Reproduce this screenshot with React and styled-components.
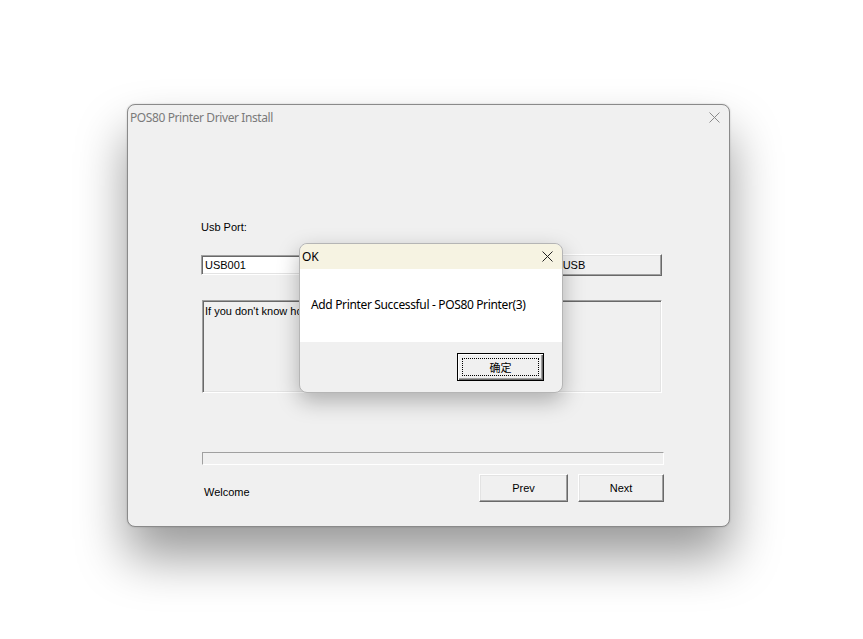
import styled, { createGlobalStyle } from "styled-components";

const GlobalStyle = createGlobalStyle`
  html, body {
    margin: 0;
    padding: 0;
    background: #ffffff;
  }
`;

const dlgFont = `"Liberation Sans", "DejaVu Sans", sans-serif`;
const uiFont = `"Noto Sans", "Open Sans", sans-serif`;

const Desktop = styled.div`
  width: 863px;
  height: 639px;
  padding: 104px 0 0 127px;
  box-sizing: border-box;
  overflow: hidden;
`;

const Window = styled.div`
  position: relative;
  width: 603px;
  height: 423px;
  box-sizing: border-box;
  background: #f0f0f0;
  border: 1px solid #8a8a8a;
  border-radius: 8px;
  box-shadow: 0 30px 50px rgba(0, 0, 0, 0.4), 0 0 2px rgba(0, 0, 0, 0.2);
  display: flex;
  flex-direction: column;
`;

const TitleBar = styled.div`
  height: 25px;
  display: flex;
  align-items: center;
  justify-content: space-between;
  padding: 0 9px 0 2px;
  font-family: ${uiFont};
  font-size: 12px;
  letter-spacing: ${(p) => (p.$active ? 0 : -0.4)}px;
  color: ${(p) => (p.$active ? "#000" : "#7a7a7a")};
  background: ${(p) => p.$bg || "transparent"};
  border-radius: 7px 7px 0 0;
`;

const CloseIcon = ({ color }) => (
  <svg width="11" height="11" viewBox="0 0 11 11">
    <path d="M0.5 0.5 L10.5 10.5 M10.5 0.5 L0.5 10.5" stroke={color} strokeWidth="1" />
  </svg>
);

const Body = styled.div`
  flex: 1;
  display: flex;
  flex-direction: column;
  padding: 91px 67px 0 73px;
  font-family: ${dlgFont};
  font-size: 11px;
  color: #000;
`;

const Label = styled.div`
  line-height: 13px;
  margin-left: ${(p) => p.$indent || 0}px;
  margin-top: ${(p) => p.$drop || 0}px;
`;

const PortRow = styled.div`
  display: flex;
  align-items: center;
  justify-content: space-between;
  margin-top: 20px;
  height: 22px;
`;

const Sunken = styled.div`
  box-sizing: border-box;
  border-style: solid;
  border-width: 1px;
  border-color: #a0a0a0 #ffffff #ffffff #a0a0a0;
  box-shadow: inset 1px 1px 0 #696969, inset -1px -1px 0 #e3e3e3;
`;

const Field = styled(Sunken)`
  width: 240px;
  height: 20px;
  background: #ffffff;
  padding: 2px 3px;
  line-height: 14px;
`;

const Memo = styled(Sunken)`
  margin-top: 24px;
  margin-left: 1px;
  height: 93px;
  background: #f0f0f0;
  padding: 4px 2px;
  line-height: 13px;
`;

const Progress = styled(Sunken)`
  margin-top: 59px;
  margin-left: 1px;
  margin-right: -2px;
  height: 13px;
  box-shadow: none;
  background: #f0f0f0;
`;

const BottomRow = styled.div`
  display: flex;
  align-items: center;
  margin-top: 9px;
  margin-right: -2px;
`;

const Spacer = styled.div`
  flex: 1;
`;

const Button = styled.button`
  box-sizing: border-box;
  width: ${(p) => p.$w}px;
  height: ${(p) => p.$h || 28}px;
  margin-left: ${(p) => p.$gap || 0}px;
  padding: 0;
  background: #f0f0f0;
  font-family: ${dlgFont};
  font-size: 11px;
  color: #000;
  border-style: solid;
  border-width: 1px;
  border-color: #ffffff #696969 #696969 #ffffff;
  box-shadow: inset -1px -1px 0 #a0a0a0, inset 1px 1px 0 #e3e3e3;
  display: flex;
  align-items: center;
  justify-content: center;
`;

const DefaultButton = styled(Button)`
  border: 1px solid #000;
  box-shadow: inset 1px 1px 0 #ffffff, inset -1px -1px 0 #696969,
    inset -2px -2px 0 #a0a0a0;
  font-family: "Noto Sans CJK SC", sans-serif;
  font-size: 11px;
`;

const FocusRect = styled.span`
  box-sizing: border-box;
  width: calc(100% - 8px);
  height: calc(100% - 8px);
  border: 1px dotted #000;
  display: flex;
  align-items: center;
  justify-content: center;
`;

const Dialog = styled.div`
  position: absolute;
  left: 171px;
  top: 138px;
  width: 264px;
  height: 150px;
  box-sizing: border-box;
  border: 1px solid #b5b5b5;
  border-radius: 8px;
  background: #f0f0f0;
  box-shadow: 0 8px 22px rgba(0, 0, 0, 0.28);
  display: flex;
  flex-direction: column;
  overflow: hidden;
`;

const Message = styled.div`
  height: 73px;
  background: #ffffff;
  display: flex;
  align-items: center;
  padding: 0 0 2px 11px;
  box-sizing: border-box;
  font-family: ${uiFont};
  font-size: 12px;
  letter-spacing: -0.35px;
  color: #000;
`;

const DialogFooter = styled.div`
  flex: 1;
  display: flex;
  justify-content: flex-end;
  align-items: flex-start;
  padding: 11px 18px 0 0;
`;

export default function App() {
  return (
    <>
      <GlobalStyle />
      <Desktop>
        <Window>
          <TitleBar>
            <span>POS80 Printer Driver Install</span>
            <CloseIcon color="#8a8a8a" />
          </TitleBar>
          <Body>
            <Label>Usb Port:</Label>
            <PortRow>
              <Field>USB001</Field>
              <Button $w={214} $h={22}>Search USB</Button>
            </PortRow>
            <Memo>If you don't know how to select the port, please click Search USB</Memo>
            <Progress />
            <BottomRow>
              <Label $indent={3} $drop={8}>Welcome</Label>
              <Spacer />
              <Button $w={89}>Prev</Button>
              <Button $w={86} $gap={10}>Next</Button>
            </BottomRow>
          </Body>

          <Dialog>
            <TitleBar $active $bg="#f6f3e2">
              <span>OK</span>
              <CloseIcon color="#222" />
            </TitleBar>
            <Message>Add Printer Successful - POS80 Printer(3)</Message>
            <DialogFooter>
              <DefaultButton $w={87}>
                <FocusRect>确定</FocusRect>
              </DefaultButton>
            </DialogFooter>
          </Dialog>
        </Window>
      </Desktop>
    </>
  );
}
